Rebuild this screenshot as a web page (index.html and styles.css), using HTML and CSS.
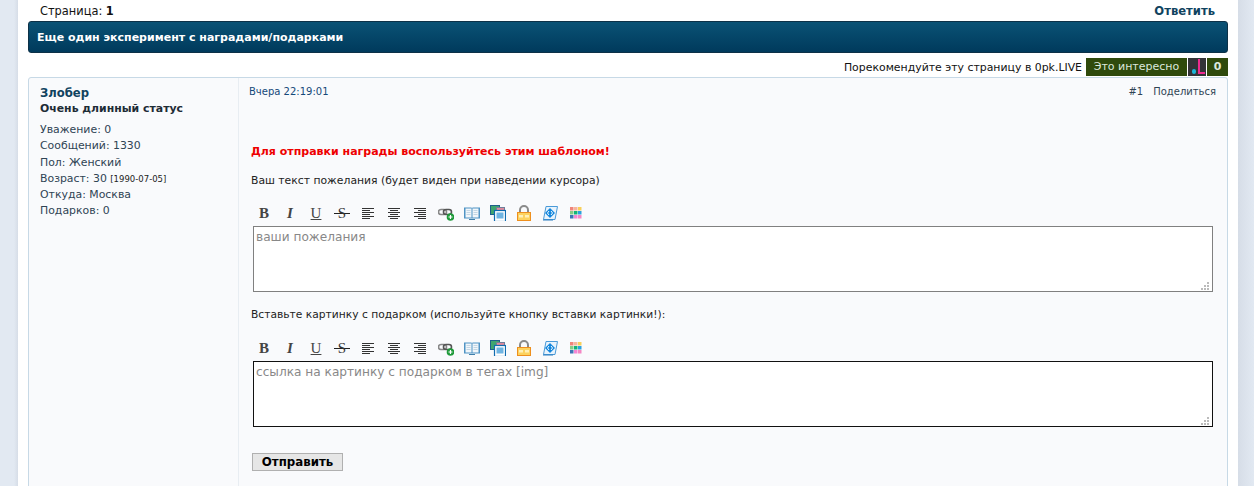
FILE: index.html
```html
<!DOCTYPE html>
<html lang="ru">
<head>
    <meta charset="UTF-8">
    <title>Еще один эксперимент с наградами/подарками</title>
    <link rel="stylesheet" href="styles.css">
</head>
<body>
    <!-- editor icons, used by both toolbars -->
    <svg class="sprite" xmlns="http://www.w3.org/2000/svg">
        <symbol id="i-left" viewBox="0 0 16 16"><path d="M2 3.500h12M2 5.500h8M2 7.500h12M2 9.500h8M2 11.500h12M2 13.500h8" stroke="#333"/></symbol>
        <symbol id="i-center" viewBox="0 0 16 16"><path d="M2 3.500h12M4 5.500h8M2 7.500h12M4 9.500h8M2 11.500h12M4 13.500h8" stroke="#333"/></symbol>
        <symbol id="i-right" viewBox="0 0 16 16"><path d="M2 3.500h12M6 5.500h8M2 7.500h12M6 9.500h8M2 11.500h12M6 13.500h8" stroke="#333"/></symbol>
        <symbol id="i-link" viewBox="0 0 16 16"><rect x="0.500" y="4.500" width="8" height="5" rx="2.500" fill="none" stroke="#888" stroke-width="1.600"/><rect x="5.500" y="4.500" width="8" height="5" rx="2.500" fill="none" stroke="#555" stroke-width="1.600"/><circle cx="12.500" cy="12" r="3.800" fill="#1f9a3a"/><path d="M10.500 12h4M12.500 10v4" stroke="#fff" stroke-width="1.200"/></symbol>
        <symbol id="i-book" viewBox="0 0 16 16"><path d="M0 2.500h7.500l.5 1 .5-1H16v11H0z" fill="#4f93c4"/><path d="M1.500 3.500h6v9h-6zM8.500 3.500h6v9h-6z" fill="#f1f6fa"/><path d="M2.500 5.500h4M2.500 7.500h4M2.500 9.500h4M9.500 5.500h4M9.500 7.500h4M9.500 9.500h4" stroke="#c3d6e4"/><path d="M5 14.500h6" stroke="#3f7eaa"/></symbol>
        <symbol id="i-copy" viewBox="0 0 16 16"><rect x="0.500" y="0.500" width="9" height="9" fill="#3fa56f" stroke="#1f5f8a"/><rect x="6.500" y="2.500" width="8" height="7" fill="#e08a9c" stroke="#6f7f9a"/><rect x="4.500" y="5.500" width="11" height="11" fill="#fff" stroke="#0f6cb0" stroke-width="1.200"/><rect x="6.500" y="7.500" width="7" height="6" fill="#6fb4e2"/></symbol>
        <symbol id="i-lock" viewBox="0 0 16 16"><path d="M4 8V5a4 4 0 0 1 8 0v3" fill="none" stroke="#8a8a8a" stroke-width="2"/><rect x="1.500" y="7.500" width="13" height="8" fill="#fcd25f" stroke="#ee8f1e"/><path d="M3 10h4v2.500H3zM9 10h4v2.500H9z" fill="#fff0b8"/></symbol>
        <symbol id="i-script" viewBox="0 0 16 16"><path d="M4 1.500h11.500l-2.500 13H1.500z" fill="#e8f3fc" stroke="#4a9ad8"/><path d="M1 15h10" stroke="#2f7fc0"/><path d="M8 3 13 8 8 13 3 8z" fill="#1186dd"/><path d="M7 6 5.500 8 7 10M9 6l1.500 2L9 10" fill="none" stroke="#fff"/></symbol>
        <symbol id="i-color" viewBox="0 0 16 16"><rect x="2" y="2" width="3.500" height="3.500" fill="#f0857a"/><rect x="6" y="2" width="3.500" height="3.500" fill="#f8b59c"/><rect x="10" y="2" width="3.500" height="3.500" fill="#f8cf5a"/><rect x="2" y="6" width="3.500" height="3.500" fill="#86cc86"/><rect x="6" y="6" width="3.500" height="3.500" fill="#14b478"/><rect x="10" y="6" width="3.500" height="3.500" fill="#2aa0de"/><rect x="2" y="10" width="3.500" height="3.500" fill="#3c74b4"/><rect x="6" y="10" width="3.500" height="3.500" fill="#f486d4"/><rect x="10" y="10" width="3.500" height="3.500" fill="#f486c4"/></symbol>
    </svg>

    <div class="wrapper">
        <div class="page-top">
            <span>Страница: <b>1</b></span>
            <a class="reply" href="#">Ответить</a>
        </div>
        <div class="topic-title">Еще один эксперимент с наградами/подарками</div>
        <div class="recommend">
            <span class="rec-text">Порекомендуйте эту страницу в 0pk.LIVE</span>
            <span class="rec-btn">Это интересно</span>
            <span class="rec-logo"><i class="logo-dot"></i><i class="logo-l"></i></span>
            <span class="rec-count">0</span>
        </div>

        <div class="post">
            <div class="author">
                <div class="nick">Злобер</div>
                <div class="status">Очень длинный статус</div>
                <ul class="stats">
                    <li>Уважение: 0</li>
                    <li>Сообщений: 1330</li>
                    <li>Пол: Женский</li>
                    <li>Возраст: 30 <small>[1990-07-05]</small></li>
                    <li>Откуда: Москва</li>
                    <li>Подарков: 0</li>
                </ul>
            </div>
            <div class="post-body">
                <div class="post-head">
                    <span class="date">Вчера 22:19:01</span>
                    <span class="post-links"><span class="num">#1</span><span>Поделиться</span></span>
                </div>
                <div class="warn">Для отправки награды воспользуйтесь этим шаблоном!</div>
                <div class="hint">Ваш текст пожелания (будет виден при наведении курсора)</div>
                <div class="toolbar">
                    <span class="tb tb-b">B</span>
                    <span class="tb tb-i">I</span>
                    <span class="tb tb-u">U</span>
                    <span class="tb tb-s">S</span>
                    <svg class="tb"><use href="#i-left"/></svg>
                    <svg class="tb"><use href="#i-center"/></svg>
                    <svg class="tb"><use href="#i-right"/></svg>
                    <svg class="tb"><use href="#i-link"/></svg>
                    <svg class="tb"><use href="#i-book"/></svg>
                    <svg class="tb"><use href="#i-copy"/></svg>
                    <svg class="tb"><use href="#i-lock"/></svg>
                    <svg class="tb"><use href="#i-script"/></svg>
                    <svg class="tb"><use href="#i-color"/></svg>
                </div>
                <textarea class="field">ваши пожелания</textarea>
                <div class="hint hint-second">Вставьте картинку с подарком (используйте кнопку вставки картинки!):</div>
                <div class="toolbar toolbar-second">
                    <span class="tb tb-b">B</span>
                    <span class="tb tb-i">I</span>
                    <span class="tb tb-u">U</span>
                    <span class="tb tb-s">S</span>
                    <svg class="tb"><use href="#i-left"/></svg>
                    <svg class="tb"><use href="#i-center"/></svg>
                    <svg class="tb"><use href="#i-right"/></svg>
                    <svg class="tb"><use href="#i-link"/></svg>
                    <svg class="tb"><use href="#i-book"/></svg>
                    <svg class="tb"><use href="#i-copy"/></svg>
                    <svg class="tb"><use href="#i-lock"/></svg>
                    <svg class="tb"><use href="#i-script"/></svg>
                    <svg class="tb"><use href="#i-color"/></svg>
                </div>
                <textarea class="field field-active">ссылка на картинку с подарком в тегах [img]</textarea>
                <button class="send" type="button">Отправить</button>
            </div>
        </div>
    </div>
</body>
</html>
```

FILE: styles.css
```css
body {
    margin: 0;
    height: 486px;
    overflow: hidden;
    background:
        linear-gradient(to right, #d6dde7, #e2e9f2) right top / 16px 100% no-repeat,
        linear-gradient(to left, #d6dde7, #e2e9f2 4px) left top / 18px 100% no-repeat;
    font-family: "DejaVu Sans", Verdana, sans-serif;
    font-size: 11px;
    color: #222;
}

.sprite {
    display: none;
}

.wrapper {
    margin: 0 16px 0 18px;
    height: 486px;
    padding: 0 10px;
    background-color: #ffffff;
    overflow: hidden;
}

.page-top {
    display: flex;
    justify-content: space-between;
    height: 21px;
    padding: 0 13px 0 12px;
    line-height: 22px;
    font-size: 11.4px;
    color: #111;
}

.reply {
    font-size: 11.6px;
    font-weight: bold;
    color: #10435f;
    text-decoration: none;
}

.topic-title {
    height: 30px;
    padding-left: 8px;
    line-height: 32px;
    border: 1px solid #0d3147;
    border-radius: 3px;
    background: linear-gradient(to bottom, #0a5275, #003a5c);
    color: #ffffff;
    font-weight: bold;
}

.recommend {
    display: flex;
    justify-content: flex-end;
    gap: 1px;
    height: 18px;
    margin-top: 5px;
    margin-bottom: 1px;
}

.rec-text {
    margin-right: 3px;
    line-height: 20px;
    font-size: 10.9px;
    color: #111;
}

.rec-btn, .rec-count {
    height: 18px;
    line-height: 18px;
    background-color: #2f4a0c;
    color: #dce8dc;
    text-align: center;
}

.rec-btn {
    width: 101px;
}

.rec-count {
    width: 21px;
    font-weight: bold;
}

.rec-logo {
    position: relative;
    width: 18px;
    height: 18px;
    background-color: #333338;
}

.logo-dot {
    position: absolute;
    left: 4px;
    bottom: 2px;
    width: 4px;
    height: 5px;
    border-radius: 2px;
    background-color: #19b5d8;
}

.logo-l {
    position: absolute;
    left: 10px;
    top: 1px;
    width: 7px;
    height: 15px;
    border-left: 2px solid #ee2a8e;
    border-bottom: 2px solid #ee2a8e;
    box-sizing: border-box;
}

.post {
    display: flex;
    height: 420px;
    border: 1px solid #c7d9e6;
    border-radius: 3px 3px 0 0;
    background-color: #f9fafc;
}

.author {
    width: 198px;
    padding: 7px 0 0 11px;
    border-right: 1px solid #e8edf2;
    color: #2f4454;
}

.nick {
    font-size: 11.6px;
    font-weight: bold;
    line-height: 16px;
    color: #10435f;
}

.status {
    font-size: 10.9px;
    font-weight: bold;
    line-height: 16px;
    color: #1e2c36;
}

.stats {
    list-style: none;
    margin: 5px 0 0;
    padding: 0;
    font-size: 10.9px;
    line-height: 16.25px;
}

.stats small {
    font-size: 8.5px;
    color: #222;
}

.post-body {
    flex: 1;
    padding: 0 11px 0 12px;
    min-width: 0;
}

.post-head {
    display: flex;
    justify-content: space-between;
    height: 26px;
    margin-left: -2px;
    padding-top: 7px;
    line-height: 14px;
    font-size: 10px;
}

.date {
    color: #15497a;
}

.post-links {
    color: #2f4454;
}

.post-links .num {
    margin-right: 10px;
}

.warn {
    margin-top: 33px;
    line-height: 16px;
    font-weight: bold;
    color: #ee0000;
}

.hint {
    margin-top: 13px;
    line-height: 16px;
    font-size: 10.8px;
    color: #222;
}

.hint-second {
    margin-top: 15px;
    font-size: 10.7px;
}

.toolbar {
    display: flex;
    gap: 10px;
    height: 16px;
    margin-top: 16px;
    padding-left: 5px;
}

.toolbar-second {
    margin-top: 17px;
}

.tb {
    display: block;
    width: 16px;
    height: 16px;
    flex: none;
    font-family: "Liberation Serif", serif;
    font-size: 15px;
    line-height: 16px;
    text-align: center;
    color: #444;
}

.tb-b {
    font-weight: bold;
}

.tb-i {
    font-style: italic;
    font-weight: bold;
}

.tb-u {
    text-decoration: underline;
}

/* the strike runs wider than the letter */
.tb-s {
    background: linear-gradient(#222, #222) center 8px / 16px 1px no-repeat;
    color: #333;
}

.field {
    display: block;
    box-sizing: border-box;
    width: 960px;
    height: 66px;
    margin: 5px 0 0 2px;
    padding: 2px;
    border: 1px solid #808080;
    resize: none;
    /* resize grip, six dots */
    background:
        linear-gradient(#bbb, #bbb) right 3px bottom 1px / 2px 2px no-repeat,
        linear-gradient(#bbb, #bbb) right 6px bottom 1px / 2px 2px no-repeat,
        linear-gradient(#bbb, #bbb) right 9px bottom 1px / 2px 2px no-repeat,
        linear-gradient(#bbb, #bbb) right 3px bottom 4px / 2px 2px no-repeat,
        linear-gradient(#bbb, #bbb) right 6px bottom 4px / 2px 2px no-repeat,
        linear-gradient(#bbb, #bbb) right 3px bottom 7px / 2px 2px no-repeat,
        #ffffff;
    font-family: "DejaVu Sans", Verdana, sans-serif;
    font-size: 12.15px;
    line-height: 16px;
    color: #888888;
    outline: none;
}

.field-active {
    border-color: #111111;
}

.send {
    display: block;
    box-sizing: border-box;
    width: 91px;
    height: 18px;
    margin: 26px 0 0 1px;
    padding: 0;
    border: 1px solid #b0b0b0;
    border-radius: 0;
    background-color: #e6e6e6;
    font-family: "DejaVu Sans", Verdana, sans-serif;
    font-size: 11.8px;
    font-weight: bold;
    line-height: 16px;
    color: #000000;
}
```
